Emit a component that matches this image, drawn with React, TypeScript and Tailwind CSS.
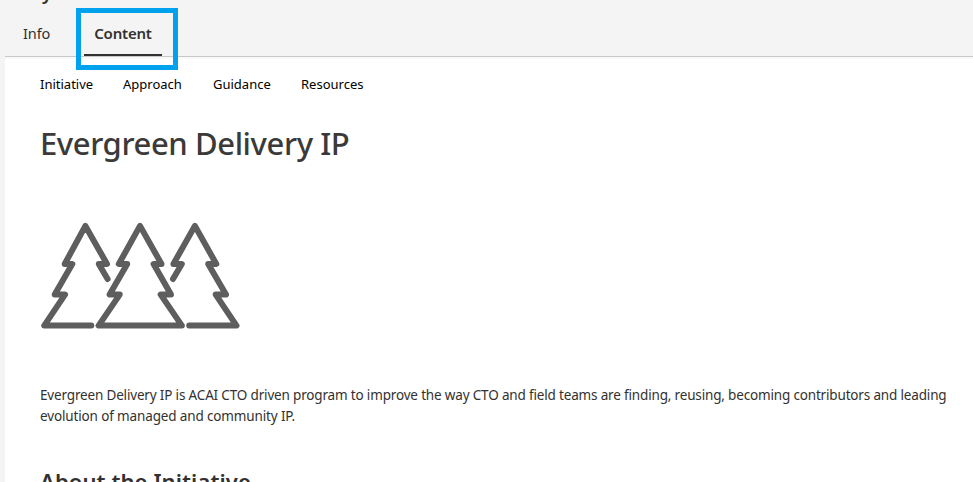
const sections = [
  { label: 'Initiative', box: 'w-[53px]' },
  { label: 'Approach', box: 'w-[60px]' },
  { label: 'Guidance', box: 'w-[58px]' },
  { label: 'Resources', box: 'w-[62px]' },
];

function Trees() {
  return (
    <svg className="block h-[108px] w-[200px]" viewBox="40 222 200 108" fill="none" stroke="#5e5e5e" strokeWidth="6" strokeLinecap="round" strokeLinejoin="round">
      <path d="M91.3 325.6H44.2L65 294.6H54.7L72.3 264H64.7L85.4 225.9L107 264H98.8L107.6 279" />
      <path d="M98.6 325.6H181.9L160.7 294.6H171L153.6 264H161.5L140 225.9L118.8 264H127.2L109.6 294.6H119.7Z" />
      <path d="M173 279L181.8 264H173.4L194.9 225.9L216.3 264H208.2L226 294.6H215.7L236.5 325.6H189.2" />
    </svg>
  );
}

export default function App() {
  return (
    <div className="relative h-[482px] w-[973px] overflow-hidden bg-[#f4f4f4] font-['Noto_Sans','Open_Sans',sans-serif] text-[#323130]">
      <header className="h-14 pl-[22px]">
        <div className="h-4 overflow-hidden pl-[20px]">
          <div className="-mt-[19px] text-[18px] leading-6 font-semibold">y</div>
        </div>
        <nav className="flex h-10 whitespace-nowrap">
          <div className="w-[62px] pt-[6px] pl-px text-[14.5px] leading-[22px] tracking-[-0.1px]">Info</div>
          <div className="flex h-10 w-[78px] justify-center border-b-2 border-[#323130] pt-[6px] text-[15px] leading-[22px] font-semibold tracking-[-0.2px]">Content</div>
        </nav>
      </header>
      <main className="ml-[5px] h-[426px] border-t border-[#c8c8c8] bg-white">
        <div className="h-0.5 bg-[#f9f9f9]" />
        <div className="pl-[35px]">
          <nav className="flex gap-[30px] pt-[15px] text-[13px] leading-5 whitespace-nowrap text-black">
            {sections.map((s) => (
              <div key={s.label} className={s.box}>{s.label}</div>
            ))}
          </nav>
          <h1 className="mt-[27px] h-[45px] text-[31px] leading-[44px] font-medium tracking-[-0.4px] whitespace-nowrap text-[#3b3a39]">Evergreen Delivery IP</h1>
          <div className="mt-[56px]"><Trees /></div>
          <div className="mt-[55px] text-[13.5px] leading-[21px] whitespace-nowrap">
            <p className="tracking-[-0.165px]">Evergreen Delivery IP is ACAI CTO driven program to improve the way CTO and field teams are finding, reusing, becoming contributors and leading</p>
            <p className="tracking-[-0.14px]">evolution of managed and community IP.</p>
          </div>
          <h2 className="mt-[38px] text-[22px] leading-8 font-semibold tracking-[0.1px] whitespace-nowrap">About the Initiative</h2>
        </div>
      </main>
      <div className="absolute top-2 left-[76px] h-[62px] w-[102px] border-5 border-[#00a2ed]" />
    </div>
  );
}
